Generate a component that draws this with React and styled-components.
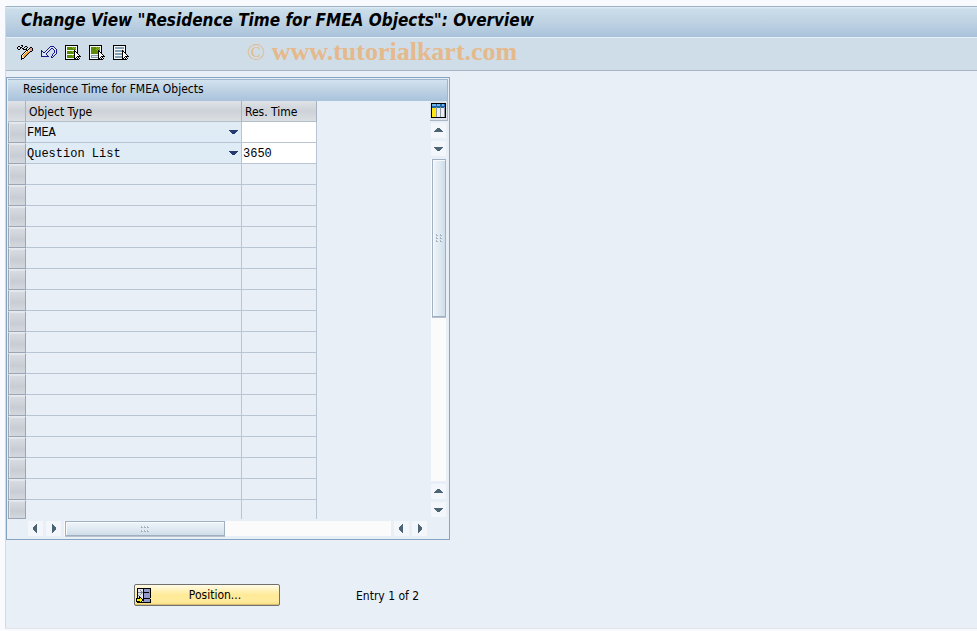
import React, {Component} from "react";
import styled, {createGlobalStyle} from 'styled-components';

const GlobalStyle = createGlobalStyle`
  * {
    box-sizing: border-box;
  }
  body {
    margin: 0;
    background: #f8fafd;
    color: #000;
    font: 12px/16px "DejaVu Sans Condensed", Tahoma, sans-serif;
  }
  button, input, select {
    margin: 0;
    padding: 0;
    border: 0;
    border-radius: 0;
    background: none;
    color: inherit;
    font: inherit;
  }
  svg {
    display: block;
  }
`

const Page = styled.div`
  min-height: 100vh;
  padding: 6px 0 3px 5px;
  display: flex;
`

const Frame = styled.main`
  flex: 1;
  min-width: 0;
  border-left: 1px solid #cfdae8;
  border-bottom: 1px solid #e2e6ec;
  background: #e8eff6;
`

const TitleBar = styled.header`
  height: 32px;
  padding: 0 15px;
  border-top: 1px solid #9db3c8;
  border-bottom: 1px solid #e6f0f8;
  background: linear-gradient(#e3eef6 0, #cbdeea 2px, #bed2e3 50%, #a9c2db);
  display: flex;
  align-items: center;
`

const Title = styled.h1`
  margin: 0 0 4px;
  font: italic bold 17px/20px "DejaVu Sans Condensed", Tahoma, sans-serif;
  white-space: nowrap;
`

const Toolbar = styled.div`
  position: relative;
  height: 33px;
  padding: 7px 11px 0;
  border-bottom: 1px solid #a5b5c8;
  background: #cfdde8;
  display: flex;
  gap: 8px;
`

const IconButton = styled.button`
  width: 16px;
  height: 16px;
`

const Watermark = styled.span`
  position: absolute;
  left: 241px;
  top: 0;
  color: #e5b98b;
  font: bold 26px/28px "Liberation Serif", serif;
  white-space: nowrap;
  pointer-events: none;
`

const Copy = styled.span`
  font-size: 24px;
  font-weight: normal;
`

const Content = styled.div`
  padding: 6px 0 22px;
`

const Panel = styled.section`
  max-width: 444px;
  padding: 1px;
  border: 1px solid #86a3c1;
`

const PanelTitle = styled.h2`
  height: 22px;
  margin: 0;
  padding: 0 15px;
  border: 1px solid #a0b6cf;
  border-width: 1px 1px 0 0;
  background: linear-gradient(#d3e2ef, #bdd1e3 50%, #a9c3dc);
  font: inherit;
  line-height: 18px;
`

const PanelBody = styled.div`
  display: grid;
  grid-template-columns: minmax(0, 1fr) 18px;
`

const Table = styled.table`
  width: 309px;
  border-collapse: separate;
  border-spacing: 0;
  table-layout: fixed;
`

const HeadCell = styled.th`
  width: ${p => p.$width}px;
  height: 21px;
  padding: 2px 2px 0 3px;
  border-right: 1px solid #a9b3c0;
  border-bottom: 1px solid #b4bfcc;
  background: linear-gradient(#dfe3e8, #cdd2d9 50%, #dbdfe2);
  font-weight: normal;
  text-align: left;
`

const MarkCell = styled.td`
  height: ${p => p.$last ? 19 : 21}px;
  padding: 0;
`

const MarkButton = styled.button`
  display: block;
  width: 18px;
  height: ${p => p.$last ? 19 : 21}px;
  border: 1px solid #9aa6b6;
  border-top-color: #e6eaee;
  background: linear-gradient(#d9dde2, #c8cdd5 60%, #d4d8de);
  box-shadow: inset 1px 1px #e3e7eb;
`

const Cell = styled.td`
  padding: 0;
  border-right: 1px solid #bac5d4;
  border-bottom: ${p => p.$last ? 0 : 1}px solid #bac5d4;
  background: ${p => p.$fill || 'transparent'};
`

const SelectWrap = styled.div`
  display: grid;
  align-items: center;

  > * {
    grid-area: 1 / 1;
  }
  svg {
    justify-self: end;
    margin: 0 3px 2px 0;
    pointer-events: none;
  }
`

const TypeSelect = styled.select`
  appearance: none;
  width: 100%;
  height: 20px;
  padding: 1px 16px 0 1px;
  font: 12px/16px "Liberation Mono", monospace;
`

const TimeInput = styled.input`
  display: block;
  width: 100%;
  height: 20px;
  padding: 1px 1px 0;
  font: 12px/16px "Liberation Mono", monospace;
`

const ConfigButton = styled.button`
  width: 18px;
  height: 20px;
  padding: 2px 0 0 1px;
  border-right: 1px solid #a9b4c4;
  border-bottom: 1px solid #a9b4c4;
  background: #dde3ea;
  display: flex;
  align-items: flex-start;
`

const Side = styled.div`
  display: flex;
  flex-direction: column;
`

const Bar = styled.div`
  display: flex;
  flex: 1;
  flex-direction: ${p => p.$vertical ? 'column' : 'row'};
  gap: 3px;
  padding: ${p => p.$vertical ? '2px 2px 2px 1px' : '2px 3px 2px 20px'};
`

const ArrowButton = styled.button`
  flex: none;
  width: 15px;
  height: 15px;
  background: #f3f6fa;
  display: flex;
  align-items: center;
  justify-content: center;
`

const Track = styled.div`
  flex: 1;
  background: #fbfbfc;
  padding: ${p => p.$vertical ? '0 0 0 1px' : '0 0 0 1px'};
`

const Thumb = styled.div`
  display: flex;
  align-items: center;
  justify-content: center;
  width: ${p => p.$vertical ? '14px' : '49%'};
  height: ${p => p.$vertical ? '49%' : '15px'};
  border: 1px solid #a1b0c0;
  background: linear-gradient(${p => p.$vertical ? '90deg' : '180deg'}, #eff5f9, #dfe9f2 55%, #cfdde8);
  box-shadow: inset 1px 1px #f8fbfd, 0 1px #b9c2cc;
`

const Footer = styled.div`
  display: flex;
  align-items: center;
  gap: 76px;
  padding: 44px 0 0 128px;
`

const PositionButton = styled.button`
  display: grid;
  grid-template-columns: 16px 1fr;
  align-items: center;
  width: 146px;
  height: 22px;
  padding: 0 1px;
  border: 1px solid #71706c;
  border-radius: 2px;
  background: linear-gradient(#fffbe8, #fff3bd 25%, #ffea98 50%, #ffeb9c 80%, #f5dc86);
  box-shadow: inset 0 -1px #d5bf77;
`

const FooterText = styled.span`
  padding-top: 1px;
`

const palette = {
  '#': '#000',
  n: '#18188c',
  w: '#fff',
  o: '#ee8a1c',
  y: '#ffc54a',
  r: '#dfa08c',
  l: '#f7e7c4',
  b: '#d9e6f2',
  Y: '#ffee00',
  p: '#9398ca',
  g: '#7d8894',
  s: '#dfe5ee'
}

// One character per pixel, a dot leaves the pixel empty
const Pixels = ({rows, x = 0, y = 0}) => (
  <g transform={`translate(${x} ${y})`}>
    {rows.map((row, j) => row.split('').map((c, i) => palette[c] &&
      <rect key={`${i}-${j}`} x={i} y={j} width="1" height="1" fill={palette[c]}/>
    ))}
  </g>
)

const pencilRows = [
  '....##..........',
  '.##..#..##......',
  '#..##..#..#..##.',
  '#..#.##..#..#rr#',
  '.##...####.#yrr#',
  '.........##wyrr#',
  '........#woyy##.',
  '.......#woyo#...',
  '......#woyo#....',
  '.....#woyo#.....',
  '....#woyo#......',
  '....#lyo#.......',
  '....#ll#........',
  '....###.........',
  '....#...........'
]

const undoRows = [
  '.........nnnn...',
  '........nbbbbn..',
  '.......nbbnnbbn.',
  '......nbbn..nbbn',
  'n....nbbn....nbn',
  'nn..nbbn.....nbn',
  'nbnnbbn......nbn',
  'nbbbbn......nbbn',
  'nbbbbn.....nbbn.',
  'nbbbbbn....nbn..',
  'nnnnnnnn..nbn...',
  '..........nn....'
]

const cursorRows = [
  '#......',
  '##.....',
  '#w#....',
  '#ww#...',
  '#www#..',
  '#wwww#.',
  '#ww####',
  '#w#w#..',
  '##.#w#.',
  '....#..'
]

const positionRows = [
  '.##############',
  '.#sssss#pppppp#',
  '.#ssgss#pppppp#',
  '.#sssgs#pppppp#',
  '.#ggggg######p#',
  '.#sssgs#pppppp#',
  '.#ssgss#pppppp#',
  '.#gssss#pppppp#',
  '.#s#sss#pppppp#',
  '.#s##ss#pppppp#',
  '####Y#s#######.',
  '#YYYYY##pppppp#',
  '#YYYYY##pppppp#',
  '####Y#sgpppppp#',
  '.##############'
]

const arrows = {
  up: 'M0 6h9v-1h-1v-1h-1v-1h-1v-1h-3v1h-1v1h-1v1h-1z',
  down: 'M0 3h9v1h-1v1h-1v1h-1v1h-3v-1h-1v-1h-1v-1h-1z',
  left: 'M6 0v9h-1v-1h-1v-1h-1v-1h-1v-3h1v-1h1v-1h1v-1z',
  right: 'M3 0v9h1v-1h1v-1h1v-1h1v-3h-1v-1h-1v-1h-1v-1z'
}

const Arrow = ({dir, color = '#4d6474'}) => (
  <svg width="9" height="9" viewBox="0 0 9 9" shapeRendering="crispEdges">
    <path d={arrows[dir]} fill={color}/>
  </svg>
)

const Grip = ({vertical}) => (
  <svg width="8" height="8" viewBox="0 0 8 8" shapeRendering="crispEdges">
    {(vertical ? [[1, 0], [5, 0], [1, 3], [5, 3], [1, 6], [5, 6]] : [[0, 1], [3, 1], [6, 1], [0, 5], [3, 5], [6, 5]]).map(([x, y]) => (
      <g key={`${x}-${y}`}>
        <rect x={x} y={y} width="2" height="2" fill="#a5b3c1"/>
        <rect x={x + 1} y={y} width="1" height="1" fill="#fff"/>
      </g>
    ))}
  </svg>
)

const DisplayChangeIcon = () => (
  <svg width="16" height="16" viewBox="0 0 16 16" shapeRendering="crispEdges">
    <Pixels rows={pencilRows}/>
  </svg>
)

const UndoIcon = () => (
  <svg width="16" height="16" viewBox="0 0 16 16" shapeRendering="crispEdges">
    <Pixels rows={undoRows} y={1}/>
  </svg>
)

const SelectIcon = ({kind}) => (
  <svg width="16" height="16" viewBox="0 0 16 16" shapeRendering="crispEdges">
    <rect x=".5" y=".5" width="12" height="14" fill="#f4f7f8" stroke="#000"/>
    {kind === 'all' && [2, 6, 10].map(y => (
      <g key={y}>
        <rect x="2" y={y} width="9" height="3" fill="#5b8908"/>
        <path d={`M7 ${y}h1v1h-1zM9 ${y}h1v1h-1zM8 ${y + 1}h1v1h-1zM10 ${y + 1}h1v1h-1z`} fill="#92b51c"/>
      </g>
    ))}
    {kind === 'block' && (
      <g>
        <rect x="2" y="2" width="9" height="7" fill="#5b8908"/>
        <path d="M7 2h1v1h-1zM9 2h1v1h-1zM8 3h1v1h-1zM10 3h1v1h-1zM7 4h1v1h-1zM9 4h1v1h-1zM8 5h1v1h-1z" fill="#92b51c"/>
        <rect x="2.500" y="10.500" width="7" height="2" fill="#dce7ee" stroke="#819aaa"/>
      </g>
    )}
    {kind === 'none' && [2, 5, 8, 11].map(y => (
      <rect key={y} x="2" y={y} width="9" height="2" fill="#86a0b2"/>
    ))}
    <Pixels rows={cursorRows} x={9} y={5}/>
  </svg>
)

const ConfigIcon = () => (
  <svg width="15" height="15" viewBox="0 0 15 15" shapeRendering="crispEdges">
    <rect width="15" height="15" fill="#000"/>
    <rect x="1" y="1" width="13" height="13" fill="#e9edf1"/>
    <rect x="1" y="1" width="13" height="4" fill="#1f66a8"/>
    <path d="M1 1h4v2h-4zM6 1h3v2h-3zM11 1h2v2h-2z" fill="#72b4e2"/>
    <rect x="1" y="5" width="4" height="9" fill="#ffe713"/>
    <path d="M5 4h1v10h-1zM9 4h1v10h-1zM13 4h1v10h-1z" fill="#8e979e"/>
  </svg>
)

const PositionIcon = () => (
  <svg width="16" height="15" viewBox="0 0 16 15" shapeRendering="crispEdges">
    <Pixels rows={positionRows}/>
  </svg>
)

const ScrollBar = ({vertical}) => {
  const [back, forward] = vertical ? ['up', 'down'] : ['left', 'right']
  return (
    <Bar $vertical={vertical}>
      <ArrowButton aria-label={`Scroll ${back}`}><Arrow dir={back}/></ArrowButton>
      <ArrowButton aria-label={`Scroll ${forward}`}><Arrow dir={forward}/></ArrowButton>
      <Track $vertical={vertical}>
        <Thumb $vertical={vertical}><Grip vertical={vertical}/></Thumb>
      </Track>
      <ArrowButton aria-label={`Page ${back}`}><Arrow dir={back}/></ArrowButton>
      <ArrowButton aria-label={`Page ${forward}`}><Arrow dir={forward}/></ArrowButton>
    </Bar>
  )
}

const ROW_COUNT = 19
const types = ['FMEA', 'Question List']

class App extends Component {
  constructor(props){
    super(props);
    this.state = {
      entries: [
        {type: 'FMEA', time: ''},
        {type: 'Question List', time: '3650'}
      ]
    }
  }

  updateEntry(index, data){
    var entries = this.state.entries.map((entry, i) => i === index ? {...entry, ...data} : entry)
    this.setState({entries})
  }

  renderRow(index){
    var entry = this.state.entries[index]
    var last = index === ROW_COUNT - 1
    return (
      <tr key={index}>
        <MarkCell $last={last}><MarkButton $last={last} aria-label={`Select row ${index + 1}`}/></MarkCell>
        <Cell $last={last} $fill={entry && '#dfebf5'}>
          {entry && <SelectWrap>
            <TypeSelect aria-label="Object Type" value={entry.type} onChange={e => this.updateEntry(index, {type: e.target.value})}>
              {types.map(type => <option key={type}>{type}</option>)}
            </TypeSelect>
            <Arrow dir="down" color="#253a70"/>
          </SelectWrap>}
        </Cell>
        <Cell $last={last} $fill={entry && '#fff'}>
          {entry && <TimeInput aria-label="Res. Time" value={entry.time} onChange={e => this.updateEntry(index, {time: e.target.value})}/>}
        </Cell>
      </tr>
    )
  }

  render(){
    return (
      <Page>
        <GlobalStyle/>
        <Frame>
          <TitleBar>
            <Title>Change View "Residence Time for FMEA Objects": Overview</Title>
          </TitleBar>
          <Toolbar>
            <IconButton aria-label="Display / Change"><DisplayChangeIcon/></IconButton>
            <IconButton aria-label="Undo"><UndoIcon/></IconButton>
            <IconButton aria-label="Select all"><SelectIcon kind="all"/></IconButton>
            <IconButton aria-label="Select block"><SelectIcon kind="block"/></IconButton>
            <IconButton aria-label="Deselect all"><SelectIcon kind="none"/></IconButton>
            <Watermark><Copy>©</Copy> www.tutorialkart.com</Watermark>
          </Toolbar>
          <Content>
            <Panel>
              <PanelTitle>Residence Time for FMEA Objects</PanelTitle>
              <PanelBody>
                <Table>
                  <thead>
                    <tr>
                      <HeadCell $width={18} aria-label="Row"/>
                      <HeadCell $width={216} scope="col">Object Type</HeadCell>
                      <HeadCell $width={75} scope="col">Res. Time</HeadCell>
                    </tr>
                  </thead>
                  <tbody>
                    {Array.from({length: ROW_COUNT}, (_, i) => this.renderRow(i))}
                  </tbody>
                </Table>
                <Side>
                  <ConfigButton aria-label="Table settings"><ConfigIcon/></ConfigButton>
                  <ScrollBar vertical/>
                </Side>
                <ScrollBar/>
              </PanelBody>
            </Panel>
            <Footer>
              <PositionButton><PositionIcon/><span>Position...</span></PositionButton>
              <FooterText>Entry 1 of 2</FooterText>
            </Footer>
          </Content>
        </Frame>
      </Page>
    )
  }
}

export default App
